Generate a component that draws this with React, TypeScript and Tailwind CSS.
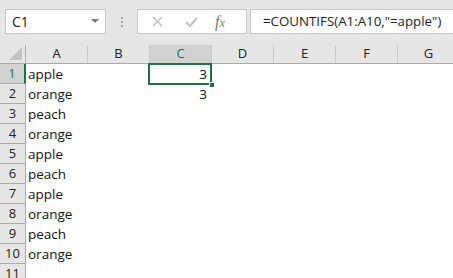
import React from "react";

const cols = ["A", "B", "C", "D", "E", "F", "G"];
const colA = ["apple", "orange", "peach", "orange", "apple", "peach", "apple", "orange", "peach", "orange", ""];
const colC: Record<number, string> = { 0: "3", 1: "3" };

export default function App() {
  return (
    <div className="w-[453px] h-[278px] overflow-hidden bg-white relative" style={{ fontFamily: '"Open Sans", "Noto Sans", sans-serif' }}>
      {/* toolbar */}
      <div className="h-[45px] bg-[#e6e6e6] flex items-start pt-[9px] pl-[5px]">
        <div className="w-[101px] h-[25px] bg-white border border-[#c6c6c6] flex items-center justify-between pl-[6px] pr-[6px]">
          <span className="text-[14px] text-[#222] leading-none">C1</span>
          <svg width="8" height="5" viewBox="0 0 8 5"><path d="M0 0 L8 0 L4 4 Z" fill="#777" /></svg>
        </div>
        <div className="w-[31px] h-[25px] flex flex-col items-center justify-center gap-[2px]">
          <div className="w-[2px] h-[2px] bg-[#a6a6a6]" />
          <div className="w-[2px] h-[2px] bg-[#a6a6a6]" />
          <div className="w-[2px] h-[2px] bg-[#a6a6a6]" />
        </div>
        <div className="w-[110px] h-[25px] bg-white border border-[#c6c6c6] flex items-center">
          <svg className="ml-[14px]" width="11" height="11" viewBox="0 0 11 11"><path d="M1 1 L10 10 M10 1 L1 10" stroke="#c0c0c0" strokeWidth="1.5" /></svg>
          <svg className="ml-[22px]" width="13" height="10" viewBox="0 0 13 10"><path d="M1 5 L5 9 L12 1" stroke="#c0c0c0" strokeWidth="2" fill="none" /></svg>
          <span className="ml-[17px] text-[16px] italic text-[#777] leading-none" style={{ fontFamily: '"Liberation Serif", serif' }}>f<span className="text-[12px]">x</span></span>
        </div>
        <div className="ml-[3px] flex-1 h-[25px] bg-white border border-[#c6c6c6] border-r-0 flex items-center pl-[12px]">
          <span className="text-[13.3px] text-[#222] whitespace-nowrap">=COUNTIFS(A1:A10,"=apple")</span>
        </div>
      </div>
      {/* header row */}
      <div className="flex h-[19px] bg-[#e6e6e6] border-b border-[#ababab]">
        <div className="w-[26px] shrink-0 relative border-r border-[#ababab]">
          <svg className="absolute right-[3px] bottom-[3px]" width="13" height="13" viewBox="0 0 13 13"><path d="M13 0 L13 13 L0 13 Z" fill="#c4c4c4" /></svg>
        </div>
        {cols.map((c) => (
          <div
            key={c}
            className={`w-[62px] shrink-0 flex items-center justify-center text-[13px] border-r border-[#c8c8c8] ${c === "C" ? "bg-[#d2d2d2] text-[#217346]" : "text-[#222]"}`}
          >
            {c}
          </div>
        ))}
      </div>
      {/* rows */}
      {colA.map((v, i) => (
        <div key={i} className="flex h-[20px]">
          <div
            className={`w-[26px] shrink-0 flex items-center justify-center text-[13px] border-b border-[#ababab] ${i === 0 ? "bg-[#d2d2d2] text-[#217346] border-r-2 border-r-[#217346]" : "bg-[#e6e6e6] text-[#222] border-r border-r-[#ababab]"}`}
          >
            {i + 1}
          </div>
          <div className="w-[62px] shrink-0 flex items-center pl-[2px] text-[13.5px] text-[#111] whitespace-nowrap">{v}</div>
          <div className="w-[62px] shrink-0" />
          <div className="w-[62px] shrink-0 flex items-center justify-end pr-[5px] text-[13.5px] text-[#111]">{colC[i] ?? ""}</div>
        </div>
      ))}
      {/* selection */}
      <div className="absolute left-[148px] top-[63px] w-[64px] h-[22px] border-2 border-[#217346]" />
      <div className="absolute left-[209px] top-[82px] w-[6px] h-[6px] bg-[#217346] border border-white" />
    </div>
  );
}
